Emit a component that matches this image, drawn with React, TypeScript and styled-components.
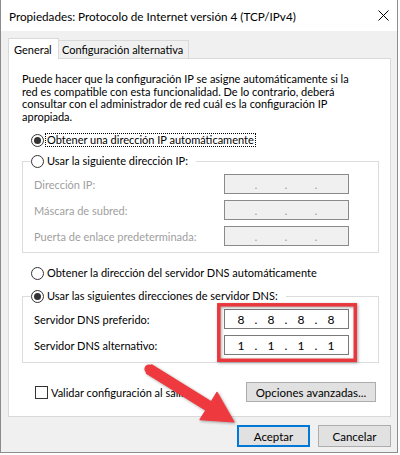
import styled, { createGlobalStyle } from "styled-components";

const GlobalStyle = createGlobalStyle`
  html, body {
    margin: 0;
    padding: 0;
    background: #ffffff;
  }
  body {
    font-family: Lato, "Noto Sans", sans-serif;
    font-size: 11px;
    color: #000000;
  }
`;

const Page = styled.div`
  position: relative;
  width: 400px;
  height: 455px;
`;

const Window = styled.div`
  width: 398px;
  height: 453px;
  box-sizing: border-box;
  border: 1px solid #8c8c8c;
  border-top: none;
  background: #f0f0f0;
  display: flex;
  flex-direction: column;
`;

const TitleBar = styled.div`
  height: 31px;
  flex-shrink: 0;
  background: #ffffff;
  display: flex;
  align-items: center;
  justify-content: space-between;
  padding: 0 8px 0 8px;
  font-size: 11.7px;
`;

const Body = styled.div`
  flex: 1;
  padding: 7px 6px 0 7px;
  display: flex;
  flex-direction: column;
`;

const TabStrip = styled.div`
  display: flex;
  align-items: flex-end;
  height: 20px;
`;

const Tab = styled.div<{ $active?: boolean; $width: number }>`
  position: relative;
  z-index: ${(p) => (p.$active ? 1 : 0)};
  box-sizing: border-box;
  width: ${(p) => p.$width}px;
  height: ${(p) => (p.$active ? 21 : 18)}px;
  margin-bottom: ${(p) => (p.$active ? -1 : 0)}px;
  background: ${(p) => (p.$active ? "#ffffff" : "#f0f0f0")};
  border: 1px solid #d9d9d9;
  border-bottom: none;
  border-left: ${(p) => (p.$active ? "1px solid #d9d9d9" : "none")};
  padding-left: ${(p) => (p.$active ? 5 : 3)}px;
  display: flex;
  align-items: center;
  white-space: nowrap;
`;

const Panel = styled.div`
  height: 359px;
  box-sizing: border-box;
  background: #ffffff;
  border: 1px solid #d9d9d9;
  padding: 0 11px 0 13px;
  display: flex;
  flex-direction: column;
`;

const Description = styled.p`
  margin: 14px 0 0 0;
  line-height: 12.5px;
  white-space: nowrap;
`;

const RadioRow = styled.label<{ $indent?: number; $gap?: number }>`
  display: flex;
  align-items: center;
  height: 14px;
  padding-left: ${(p) => p.$indent ?? 0}px;
  margin-top: ${(p) => p.$gap ?? 0}px;
  white-space: nowrap;
`;

const RadioCircle = styled.span<{ $checked?: boolean }>`
  width: 13px;
  height: 13px;
  box-sizing: border-box;
  border: 1px solid #333333;
  border-radius: 50%;
  background: #ffffff;
  display: flex;
  align-items: center;
  justify-content: center;
  flex-shrink: 0;
  &::after {
    content: "";
    width: 7px;
    height: 7px;
    border-radius: 50%;
    background: ${(p) => (p.$checked ? "#333333" : "transparent")};
  }
`;

const RadioText = styled.span<{ $focused?: boolean }>`
  margin-left: 1px;
  padding: 0 1px;
  line-height: 12px;
  border: 1px dotted ${(p) => (p.$focused ? "#000000" : "transparent")};
`;

const Group = styled.fieldset<{ $gap: number; $bottom: number }>`
  margin: ${(p) => p.$gap}px 0 0 0;
  border: 1px solid #dcdcdc;
  padding: 6px 29px ${(p) => p.$bottom}px 11px;
  min-width: 0;
  display: flex;
  flex-direction: column;
  gap: 6px;
`;

const Legend = styled.legend`
  margin-left: -3px;
  padding: 0 6px 0 0;
`;

const FieldRow = styled.div`
  display: flex;
  align-items: center;
  justify-content: space-between;
  height: 20px;
`;

const FieldLabel = styled.span<{ $disabled?: boolean }>`
  color: ${(p) => (p.$disabled ? "#a0a0a0" : "#000000")};
  white-space: nowrap;
`;

const IpField = styled.div<{ $disabled?: boolean }>`
  width: 125px;
  height: 20px;
  box-sizing: border-box;
  border: 1px solid ${(p) => (p.$disabled ? "#8a8a8a" : "#7a7a7a")};
  background: ${(p) => (p.$disabled ? "#f0f0f0" : "#ffffff")};
  padding-left: 3px;
  display: flex;
  align-items: center;
  color: ${(p) => (p.$disabled ? "#a0a0a0" : "#000000")};
  font-size: 12px;
`;

const Octet = styled.span`
  width: 26px;
  text-align: center;
`;

const Dot = styled.span`
  width: 4px;
  text-align: center;
`;

const BottomRow = styled.div`
  margin-top: 19px;
  height: 20px;
  display: flex;
  align-items: center;
  justify-content: space-between;
  padding: 0 3px 0 13px;
`;

const CheckRow = styled.label`
  display: flex;
  align-items: center;
  white-space: nowrap;
`;

const CheckBox = styled.span`
  width: 13px;
  height: 13px;
  box-sizing: border-box;
  border: 1px solid #333333;
  background: #ffffff;
  margin-right: 3px;
`;

const Button = styled.button<{ $width: number; $height: number; $default?: boolean }>`
  width: ${(p) => p.$width}px;
  height: ${(p) => p.$height}px;
  box-sizing: border-box;
  background: #e1e1e1;
  border: ${(p) => (p.$default ? "2px solid #0078d7" : "1px solid #adadad")};
  font: inherit;
  font-size: 11.5px;
  color: #000000;
  padding: 0;
  display: flex;
  align-items: center;
  justify-content: center;
  white-space: nowrap;
`;

const Footer = styled.div`
  margin-top: 8px;
  display: flex;
  justify-content: flex-end;
  gap: 8px;
`;

const Annotations = styled.svg`
  position: absolute;
  top: 0;
  left: 0;
  pointer-events: none;
  filter: drop-shadow(1px 1px 1.5px rgba(0, 0, 0, 0.35));
`;

function Radio({ checked, focused, children }: { checked?: boolean; focused?: boolean; children: string }) {
  return (
    <>
      <RadioCircle $checked={checked} />
      <RadioText $focused={focused}>{children}</RadioText>
    </>
  );
}

function Ip({ value, disabled }: { value?: string[]; disabled?: boolean }) {
  const parts = value ?? ["", "", "", ""];
  return (
    <IpField $disabled={disabled}>
      {parts.map((p, i) => (
        <span key={i} style={{ display: "contents" }}>
          <Octet>{p}</Octet>
          {i < 3 && <Dot>.</Dot>}
        </span>
      ))}
    </IpField>
  );
}

export default function App() {
  return (
    <Page>
      <GlobalStyle />
      <Window>
        <TitleBar>
          <span>Propiedades: Protocolo de Internet versión 4 (TCP/IPv4)</span>
          <svg width="11" height="11" viewBox="0 0 11 11">
            <path d="M0.5 0.5 L10.5 10.5 M10.5 0.5 L0.5 10.5" stroke="#000" strokeWidth="1" />
          </svg>
        </TitleBar>
        <Body>
          <TabStrip>
            <Tab $active $width={51}>General</Tab>
            <Tab $width={130}>Configuración alternativa</Tab>
          </TabStrip>
          <Panel>
            <Description>
              Puede hacer que la configuración IP se asigne automáticamente si la
              <br />
              red es compatible con esta funcionalidad. De lo contrario, deberá
              <br />
              consultar con el administrador de red cuál es la configuración IP
              <br />
              apropiada.
            </Description>

            <RadioRow $indent={9} $gap={10}>
              <Radio checked focused>Obtener una dirección IP automáticamente</Radio>
            </RadioRow>

            <Group $gap={7} $bottom={6}>
              <Legend>
                <RadioRow>
                  <Radio>Usar la siguiente dirección IP:</Radio>
                </RadioRow>
              </Legend>
              <FieldRow>
                <FieldLabel $disabled>Dirección IP:</FieldLabel>
                <Ip disabled />
              </FieldRow>
              <FieldRow>
                <FieldLabel $disabled>Máscara de subred:</FieldLabel>
                <Ip disabled />
              </FieldRow>
              <FieldRow>
                <FieldLabel $disabled>Puerta de enlace predeterminada:</FieldLabel>
                <Ip disabled />
              </FieldRow>
            </Group>

            <RadioRow $indent={9} $gap={13}>
              <Radio>Obtener la dirección del servidor DNS automáticamente</Radio>
            </RadioRow>

            <Group $gap={9} $bottom={7}>
              <Legend>
                <RadioRow>
                  <Radio checked>Usar las siguientes direcciones de servidor DNS:</Radio>
                </RadioRow>
              </Legend>
              <FieldRow>
                <FieldLabel>Servidor DNS preferido:</FieldLabel>
                <Ip value={["8", "8", "8", "8"]} />
              </FieldRow>
              <FieldRow>
                <FieldLabel>Servidor DNS alternativo:</FieldLabel>
                <Ip value={["1", "1", "1", "1"]} />
              </FieldRow>
            </Group>

            <BottomRow>
              <CheckRow>
                <CheckBox />
                Validar configuración al salir
              </CheckRow>
              <Button $width={130} $height={20}>Opciones avanzadas...</Button>
            </BottomRow>
          </Panel>
          <Footer>
            <Button $width={73} $height={22} $default>Aceptar</Button>
            <Button $width={73} $height={22}>Cancelar</Button>
          </Footer>
        </Body>
      </Window>

      <Annotations width="400" height="455" viewBox="0 0 400 455">
        <rect x="218.8" y="304.8" width="136.5" height="55.5" fill="none" stroke="#e8383d" strokeWidth="3.5" />
        <polygon
          points="151.6,364.8 211.2,401.8 217,392.4 234,422 200,419.6 205.9,410.3 146.4,373.3"
          fill="#ee3a3f"
          stroke="#ee3a3f"
          strokeWidth="1.2"
          strokeLinejoin="round"
        />
        <circle cx="149" cy="369" r="4.6" fill="#ee3a3f" />
      </Annotations>
    </Page>
  );
}
